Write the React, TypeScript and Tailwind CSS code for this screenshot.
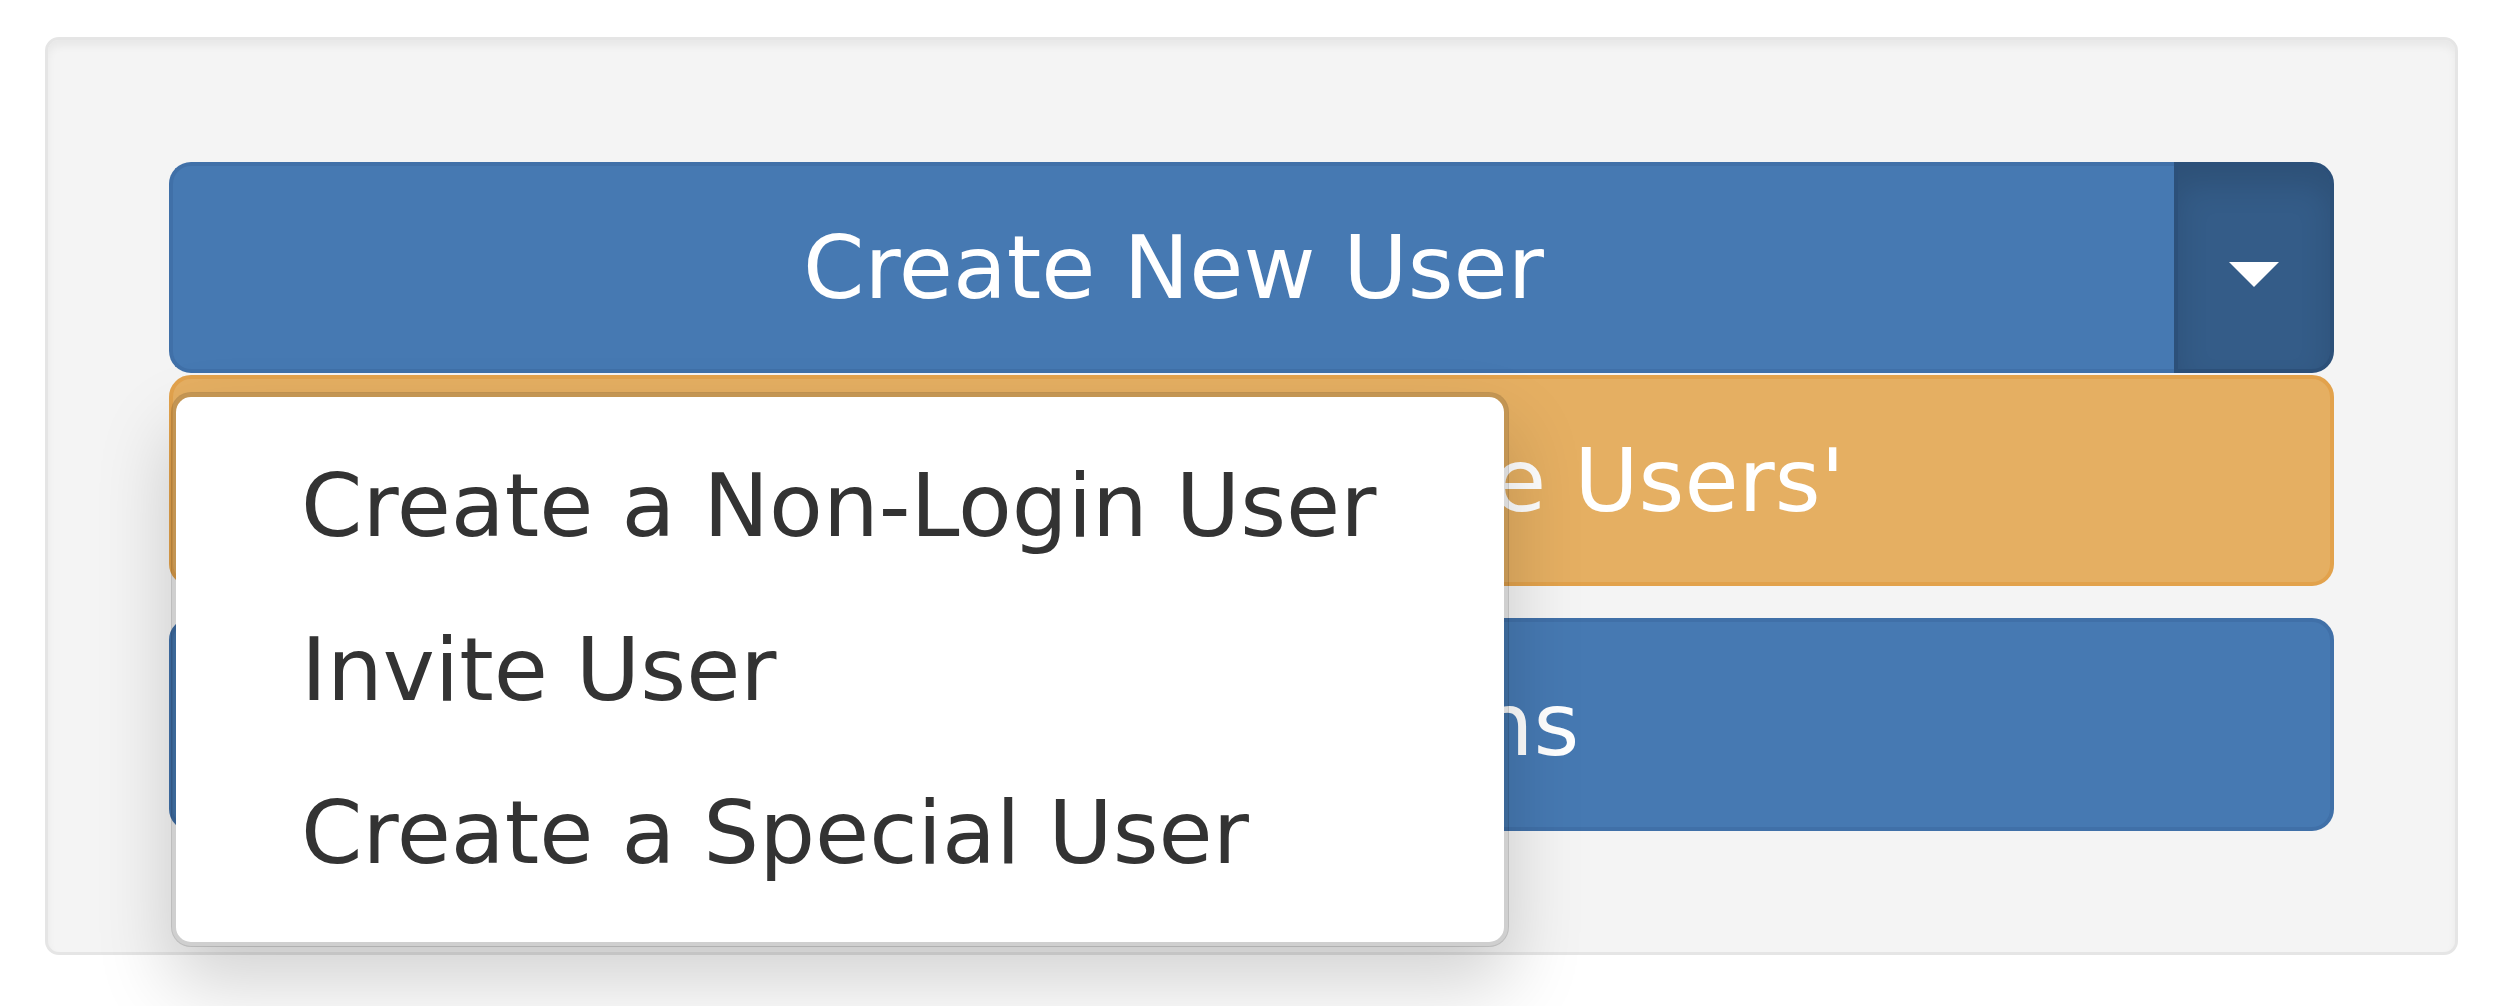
const MENU_ITEMS = ['Create a Non-Login User', 'Invite User', 'Create a Special User']

export default function App() {
  return (
    <div className="min-h-screen bg-white pt-[37px] font-['DejaVu_Sans','Verdana',sans-serif]">
      {/* well */}
      <div className="ml-[45px] w-[2413px] rounded-[14px] border-[3px] border-[#e5e5e5] bg-[#f4f4f4] px-[121px] pt-[122px] pb-[121px] shadow-[inset_0_6px_8px_rgba(0,0,0,0.05)]">
        <div className="relative flex flex-col">
          {/* split button */}
          <div className="flex h-[211px]">
            <button className="flex-1 rounded-l-[22px] border-[4px] border-r-0 border-[#4070a8] bg-[#4679b2] text-[88px] leading-none text-white">
              Create New User
            </button>
            <button className="flex w-[160px] items-center justify-center rounded-r-[22px] border-[4px] border-[#2c5079] bg-[#345c88] shadow-[inset_0_19px_31px_rgba(0,0,0,0.125)]">
              <svg width="50" height="25" viewBox="0 0 50 25" className="translate-y-[7px]">
                <polygon points="0,0 50,0 25,25" fill="#ffffff" />
              </svg>
            </button>
          </div>

          <button className="mt-[2px] h-[211px] rounded-[22px] border-[4px] border-[#e2a24c] bg-[#e5af62] text-[88px] leading-none text-white">
            Manage All 'Inactive Users'
          </button>

          <button className="mt-[32px] h-[213px] rounded-[22px] border-[4px] border-[#4070a8] bg-[#4679b2] text-[88px] leading-none text-white">
            Export Options
          </button>

          {/* dropdown menu */}
          <ul className="absolute left-[2px] top-[230px] w-[1338px] rounded-[20px] border-[5px] border-black/15 bg-white bg-clip-padding py-[27px] shadow-[0_38px_75px_rgba(0,0,0,0.175)]">
            {MENU_ITEMS.map((item) => (
              <li key={item} className="px-[125px] py-[19px] text-[88px] leading-[125.7px] whitespace-nowrap text-[#333333]">
                {item}
              </li>
            ))}
          </ul>
        </div>
      </div>
    </div>
  )
}
